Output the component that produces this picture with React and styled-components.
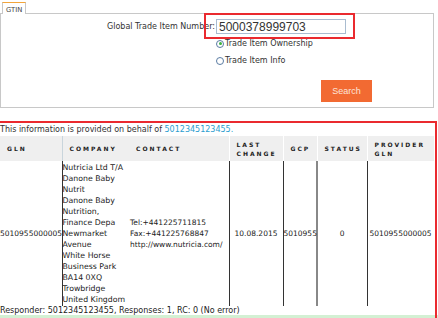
import React from "react";
import styled, { createGlobalStyle } from "styled-components";

const GlobalStyle = createGlobalStyle`
  body {
    margin: 0;
    background: #fff;
    font-family: "DejaVu Sans", Verdana, sans-serif;
    font-size: 8px;
    color: #222;
  }
`;

const companyLines = [
  "Nutricia Ltd T/A",
  "Danone Baby",
  "Nutrit",
  "Danone Baby",
  "Nutrition,",
  "Finance Depa",
  "Newmarket",
  "Avenue",
  "White Horse",
  "Business Park",
  "BA14 0XQ",
  "Trowbridge",
  "United Kingdom",
];

const contactLines = [
  "Tel:+441225711815",
  "Fax:+441225768847",
  "http://www.nutricia.com/",
];

const App = () => {
  return (
    <Page>
      <GlobalStyle />
      <Tabs>
        <Tab>GTIN</Tab>
      </Tabs>
      <Panel>
        <FormGrid>
          <Label>Global Trade Item Number:</Label>
          <Input defaultValue="5000378999703" />
          <span />
          <RadioGroup>
            <RadioRow>
              <Radio $checked />
              Trade Item Ownership
            </RadioRow>
            <RadioRow>
              <Radio />
              Trade Item Info
            </RadioRow>
          </RadioGroup>
        </FormGrid>
        <ButtonRow>
          <SearchButton>Search</SearchButton>
        </ButtonRow>
      </Panel>

      <Results>
        <Info>
          This information is provided on behalf of <Link>5012345123455.</Link>
        </Info>
        <Table>
          <colgroup>
            <col style={{ width: 62 }} />
            <col style={{ width: 67 }} />
            <col style={{ width: 100 }} />
            <col style={{ width: 54 }} />
            <col style={{ width: 34 }} />
            <col style={{ width: 50 }} />
            <col style={{ width: 67 }} />
          </colgroup>
          <thead>
            <tr>
              <Th>GLN</Th>
              <Th $divider="none">Company</Th>
              <Th>Contact</Th>
              <Th>Last change</Th>
              <Th>GCP</Th>
              <Th>Status</Th>
              <Th>Provider GLN</Th>
            </tr>
          </thead>
          <tbody>
            <tr>
              <Td $nowrap>5010955000005</Td>
              <Td $line="none" $size="7.8px">
                {companyLines.map((l, i) => (
                  <div key={i}>{l}</div>
                ))}
              </Td>
              <Td $pad="1px">
                {contactLines.map((l, i) => (
                  <div key={i}>{l}</div>
                ))}
              </Td>
              <Td $pad="5px">10.08.2015</Td>
              <Td $line="#888" $lineWidth="2px">5010955</Td>
              <Td $center>0</Td>
              <Td $pad="2px">5010955000005</Td>
            </tr>
          </tbody>
        </Table>
        <Footer>Responder: 5012345123455, Responses: 1, RC: 0 (No error)</Footer>
        <GreenBar />
      </Results>

      <Highlight $top={13} $left={204} $width={151} $height={26} />
      <Highlight $top={121} $left={-4} $width={441} $height={210} />
    </Page>
  );
};

const Page = styled.div`
  position: relative;
  width: 438px;
  height: 318px;
  overflow: hidden;
`;

const Tabs = styled.div`
  display: flex;
  padding: 2px 0 0 2px;
`;

const Tab = styled.div`
  width: 24px;
  height: 12px;
  box-sizing: border-box;
  padding: 3px 0 0 3px;
  border: 1px solid #c8c8c8;
  border-top: 1px solid #f3a53a;
  border-bottom: none;
  font-size: 6.8px;
  color: #444;
  margin-bottom: -1px;
  background: #fff;
  position: relative;
  z-index: 1;
`;

const Panel = styled.div`
  width: 434px;
  height: 95px;
  box-sizing: border-box;
  border: 1px solid #c8c8c8;
  padding-top: 5px;
`;

const FormGrid = styled.div`
  display: grid;
  grid-template-columns: 215px auto;
  align-items: center;
`;

const Label = styled.label`
  justify-self: end;
  font-size: 8px;
  color: #333;
  padding-right: 1px;
`;

const Input = styled.input`
  width: 130px;
  height: 15px;
  box-sizing: border-box;
  border: 1px solid #a9bcd0;
  padding: 0 2px;
  font-family: "Liberation Sans", Arial, sans-serif;
  font-size: 12px;
  color: #333;
  outline: none;
`;

const RadioGroup = styled.div`
  display: flex;
  flex-direction: column;
  padding-top: 1px;
`;

const RadioRow = styled.div`
  display: flex;
  align-items: center;
  height: 17px;
  font-size: 8px;
  color: #333;
`;

const Radio = styled.span`
  width: 8px;
  height: 8px;
  box-sizing: border-box;
  border-radius: 50%;
  border: 1px solid #5a7ca3;
  background: #fff;
  margin-right: 1px;
  display: flex;
  align-items: center;
  justify-content: center;

  &::after {
    content: "";
    width: 3px;
    height: 3px;
    border-radius: 50%;
    background: ${(p) => (p.$checked ? "#3cb23c" : "transparent")};
  }
`;

const ButtonRow = styled.div`
  padding: 11px 0 0 320px;
`;

const SearchButton = styled.button`
  width: 51px;
  height: 22px;
  border: none;
  background: #f26a32;
  color: #fde4d8;
  font-family: "Liberation Sans", Arial, sans-serif;
  font-size: 9px;
  padding: 0;
`;

const Results = styled.div`
  margin-top: 16px;
`;

const Info = styled.div`
  height: 12px;
  line-height: 12px;
  font-size: 8px;
  color: #333;
`;

const Link = styled.span`
  color: #2b9dcf;
`;

const Table = styled.table`
  width: 434px;
  border-collapse: collapse;
  table-layout: fixed;
`;

const Th = styled.th`
  background: #efefef;
  height: 25px;
  padding: 0 0 0 7px;
  text-align: left;
  font-size: 6px;
  font-weight: bold;
  text-transform: uppercase;
  letter-spacing: 2px;
  line-height: 9px;
  color: #222;
  border-right: ${(p) => (p.$divider === "none" ? "none" : "1px solid #fff")};
  &:first-child {
    border-right: 1px solid #c9d5dc;
  }
`;

const Td = styled.td`
  padding: 0 0 0 ${(p) => p.$pad || "0"};
  vertical-align: middle;
  line-height: 11px;
  height: 145px;
  font-size: ${(p) => p.$size || "7.5px"};
  color: #222;
  white-space: ${(p) => (p.$nowrap ? "nowrap" : "normal")};
  text-align: ${(p) => (p.$center ? "center" : "left")};
  border-right: ${(p) =>
    p.$line === "none"
      ? "none"
      : `${p.$lineWidth || "1px"} solid ${p.$line || "#333"}`};
  &:last-child {
    border-right: none;
  }
`;

const Footer = styled.div`
  height: 9px;
  line-height: 9px;
  font-size: 8px;
  color: #222;
`;

const GreenBar = styled.div`
  height: 10px;
  background: #d3f0d3;
`;

const Highlight = styled.div`
  position: absolute;
  top: ${(p) => p.$top}px;
  left: ${(p) => p.$left}px;
  width: ${(p) => p.$width}px;
  height: ${(p) => p.$height}px;
  box-sizing: border-box;
  border: 2px solid #ea2a2f;
  pointer-events: none;
`;

export default App;
